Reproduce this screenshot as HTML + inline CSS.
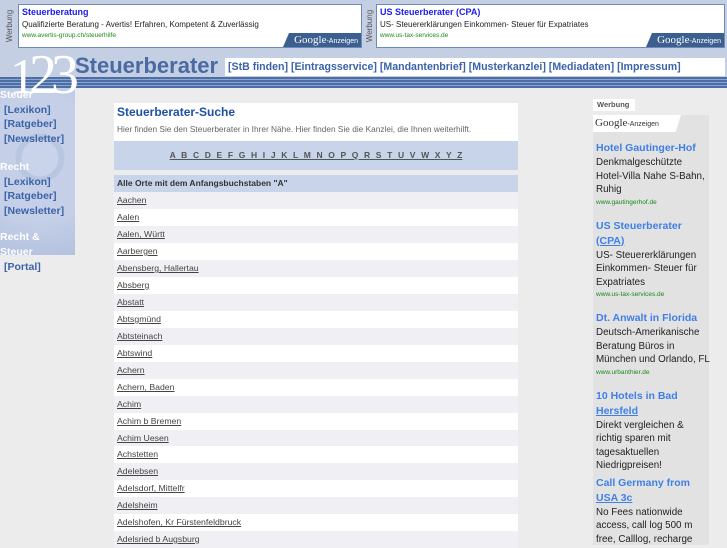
<!DOCTYPE html>
<html><head><meta charset="utf-8"><style>
*{margin:0;padding:0;box-sizing:border-box}
body{width:727px;height:545px;overflow:hidden;background:#ececec;font-family:"Liberation Sans",sans-serif;position:relative}
.abs{position:absolute}
.top{left:0;top:0;width:727px;height:78px;background:#c4cfe4}
.ad{background:#fff;border:1px solid #6e8bb8;height:44px;top:4px}
.ad .t{position:absolute;left:3px;top:2px;font-size:9px;font-weight:bold;color:#1a1aee}
.ad .d{position:absolute;left:3px;top:15px;font-size:8px;color:#222}
.ad .u{position:absolute;left:3px;top:27px;font-size:6.5px;color:#1a8a1a}
.ad .g{position:absolute;right:0;bottom:0;width:78px;height:14px;background:#3c5f8f;color:#fff;font-size:7px;line-height:14px;text-align:right;padding-right:3px;clip-path:polygon(6px 0,100% 0,100% 100%,0 100%)}
.ad .g b{font-family:"Liberation Serif",serif;font-size:11px;font-weight:normal}
.wb{font-size:8px;color:#555;transform:rotate(-90deg);transform-origin:left top;width:44px;text-align:center}
.nav{left:225px;top:58px;width:500px;height:18px;background:#fff;font-size:10.6px;font-weight:bold;color:#3b63a8;line-height:18px;padding-left:3px;white-space:nowrap}
.stripes{left:0;top:77px;width:727px;height:11px;background:repeating-linear-gradient(#4c6ea6 0 2px,#8ea6cc 2px 3px)}
.side{left:0;top:88px;width:75px;height:167px;background:radial-gradient(circle at 40px 70px,#c9d3ea 0 18px,#b9c6e0 19px 24px,#c5d0e8 25px 60px,#b3c1de 100%)}
.side div{font-size:10.5px;font-weight:bold;line-height:14.5px}
.w{color:#fff}.l{color:#3b63a8;padding-left:4px}
.main{left:114px;width:404px}
.row{position:absolute;left:114px;width:404px;height:17px;font-size:8.7px;color:#444;padding-left:3px;line-height:17px;text-decoration:underline}
.rt{left:593px;top:115px;width:116px;height:430px;background:#e2e2e2}
.rt .h{font-size:10.5px;font-weight:bold;color:#3f7fe8;line-height:15px;white-space:nowrap}
.rt .x{font-size:9.8px;color:#222;line-height:13.5px;white-space:nowrap}
.rt .u{font-size:6.5px;color:#1a8a1a;line-height:12px}
</style></head><body>
<div class="abs top"></div>
<div class="abs wb" style="left:5px;top:48px">Werbung</div>
<div class="abs ad" style="left:18px;width:344px"><div class="t">Steuerberatung</div><div class="d">Qualifizierte Beratung - Avertis! Erfahren, Kompetent &amp; Zuverlässig</div><div class="u">www.avertis-group.ch/steuerhilfe</div><div class="g"><b>Google</b>-Anzeigen</div></div>
<div class="abs wb" style="left:365px;top:48px">Werbung</div>
<div class="abs ad" style="left:376px;width:349px"><div class="t">US Steuerberater (CPA)</div><div class="d">US- Steuererklärungen Einkommen- Steuer für Expatriates</div><div class="u">www.us-tax-services.de</div><div class="g"><b>Google</b>-Anzeigen</div></div>
<div class="abs nav">[StB finden] [Eintragsservice] [Mandantenbrief] [Musterkanzlei] [Mediadaten] [Impressum]</div>
<div class="abs stripes"></div>
<div class="abs side"></div>
<div class="abs" style="left:10px;top:48px;font-family:'Liberation Serif',serif;font-size:50px;color:#fff;letter-spacing:-6px;line-height:54px">1<span style="font-size:56px">23</span></div>
<div class="abs" style="left:75px;top:53px;font-size:22px;font-weight:bold;color:#4a6aa2">Steuerberater</div>
<div class="abs" style="left:0;top:88px;width:75px">
<div class="side" style="position:static;background:none">
<div class="w">Steuer</div><div class="l">[Lexikon]</div><div class="l">[Ratgeber]</div><div class="l">[Newsletter]</div>
<div style="height:14px"></div>
<div class="w">Recht</div><div class="l">[Lexikon]</div><div class="l">[Ratgeber]</div><div class="l">[Newsletter]</div>
<div style="height:12px"></div>
<div class="w">Recht &amp;</div><div class="w">Steuer</div>
</div></div>
<div class="abs" style="left:0;top:255px;width:75px;height:20px;background:#ececec;font-size:10.5px;font-weight:bold;color:#3b63a8;padding-left:4px;line-height:24px">[Portal]</div>
<div class="abs" style="left:75px;top:88px;width:652px;height:12px;background:#ececec"></div>
<div class="abs main" style="top:103px;height:38px;background:#fff">
<div style="font-size:12px;font-weight:bold;color:#1f4fa8;padding:2px 3px">Steuerberater-Suche</div>
<div style="font-size:8.3px;color:#666;padding:3px 3px 0">Hier finden Sie den Steuerberater in Ihrer Nähe. Hier finden Sie die Kanzlei, die Ihnen weiterhilft.</div></div>
<div class="abs main" style="top:141px;height:29px;background:#c8d4ea;text-align:center;font-size:8.5px;font-weight:bold;color:#555;line-height:28px;word-spacing:3.3px;text-decoration:underline">A B C D E F G H I J K L M N O P Q R S T U V W X Y Z</div>
<div class="abs main" style="top:175px;height:17px;background:#c8d4ea;font-size:8.5px;font-weight:bold;color:#333;line-height:17px;padding-left:3px">Alle Orte mit dem Anfangsbuchstaben "A"</div>
<div class="row" style="top:192px;background:#f0f0f4">Aachen</div>
<div class="row" style="top:209px;background:#fff">Aalen</div>
<div class="row" style="top:226px;background:#f0f0f4">Aalen, Württ</div>
<div class="row" style="top:243px;background:#fff">Aarbergen</div>
<div class="row" style="top:260px;background:#f0f0f4">Abensberg, Hallertau</div>
<div class="row" style="top:277px;background:#fff">Absberg</div>
<div class="row" style="top:294px;background:#f0f0f4">Abstatt</div>
<div class="row" style="top:311px;background:#fff">Abtsgmünd</div>
<div class="row" style="top:328px;background:#f0f0f4">Abtsteinach</div>
<div class="row" style="top:345px;background:#fff">Abtswind</div>
<div class="row" style="top:362px;background:#f0f0f4">Achern</div>
<div class="row" style="top:379px;background:#fff">Achern, Baden</div>
<div class="row" style="top:396px;background:#f0f0f4">Achim</div>
<div class="row" style="top:413px;background:#fff">Achim b Bremen</div>
<div class="row" style="top:430px;background:#f0f0f4">Achim Uesen</div>
<div class="row" style="top:446px;background:#fff">Achstetten</div>
<div class="row" style="top:463px;background:#f0f0f4">Adelebsen</div>
<div class="row" style="top:480px;background:#fff">Adelsdorf, Mittelfr</div>
<div class="row" style="top:497px;background:#f0f0f4">Adelsheim</div>
<div class="row" style="top:514px;background:#fff">Adelshofen, Kr Fürstenfeldbruck</div>
<div class="row" style="top:531px;background:#f0f0f4">Adelsried b Augsburg</div>
<div class="abs" style="left:593px;top:99px;width:42px;height:12px;background:#fff;font-size:7.5px;font-weight:bold;color:#555;padding-left:4px;line-height:11px">Werbung</div>
<div class="abs rt">
<div style="height:17px;background:#fff;width:88px;font-size:7px;color:#333;line-height:17px;padding-left:2px;clip-path:polygon(0 0,100% 0,94% 100%,0 100%)"><span style="font-family:'Liberation Serif',serif;font-size:11px">Google</span>-Anzeigen</div>
<div style="padding:9px 0 0 3px;width:118px">
<div class="h">Hotel Gautinger-Hof</div><div class="x">Denkmalgeschützte<br>Hotel-Villa Nahe S-Bahn,<br>Ruhig</div><div class="u">www.gautingerhof.de</div>
<div style="height:10px"></div>
<div class="h">US Steuerberater<br><u>(CPA)</u></div><div class="x">US- Steuererklärungen<br>Einkommen- Steuer für<br>Expatriates</div><div class="u">www.us-tax-services.de</div>
<div style="height:10px"></div>
<div class="h">Dt. Anwalt in Florida</div><div class="x">Deutsch-Amerikanische<br>Beratung Büros in<br>München und Orlando, FL</div><div class="u">www.urbanthier.de</div>
<div style="height:10px"></div>
<div class="h">10 Hotels in Bad<br><u>Hersfeld</u></div><div class="x">Direkt vergleichen &amp;<br>richtig sparen mit<br>tagesaktuellen<br>Niedrigpreisen!</div>
<div style="height:3px"></div>
<div class="h">Call Germany from<br><u>USA 3c</u></div><div class="x">No Fees nationwide<br>access, call log 500 m<br>free, Calllog, recharge</div>
</div></div>
</body></html>
